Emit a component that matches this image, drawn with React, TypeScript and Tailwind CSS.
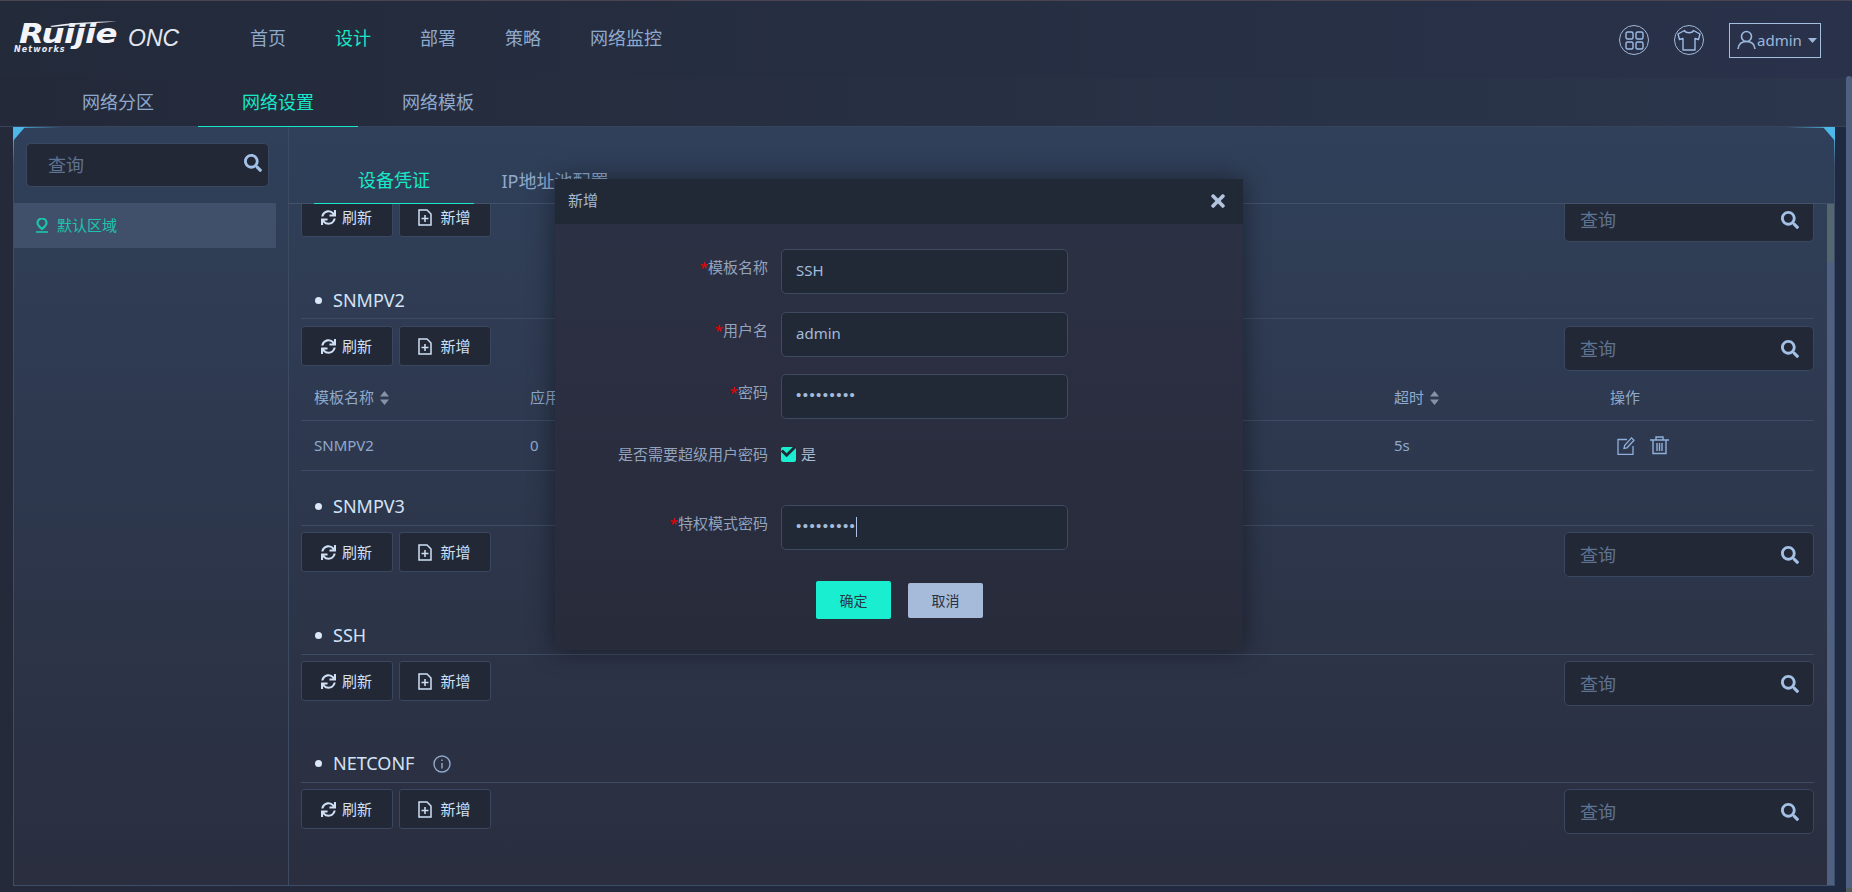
import React from "react";
import { FaSync, FaSearch, FaTimes, FaCheck } from "react-icons/fa";

const Doc = () => (
  <svg width="16" height="17" viewBox="0 0 16 17" fill="none" stroke="currentColor" strokeWidth="1.5">
    <path d="M2 1h8l4 4v11H2z" />
    <path d="M8 6v7M4.5 9.5h7" />
  </svg>
);

const Sort = () => (
  <svg width="9" height="14" viewBox="0 0 9 14" fill="#8593a8">
    <path d="M4.5 0L9 5.5H0zM4.5 14L0 8.5h9z" />
  </svg>
);

const Search = () => (
  <div className="flex h-[45px] w-[250px] items-center justify-between rounded-[5px] border border-[#3a4760] bg-[#222836] pl-[15px] pr-[14px] text-[18px] text-[#5f7390]">
    <span className="pt-[2px]">查询</span>
    <FaSearch className="h-[18px] w-[18px] text-[#a3c0e6]" />
  </div>
);

const Toolbar = () => (
  <div className="flex h-[45px] items-start justify-between">
    <div className="flex gap-[6px]">
      <div className="flex h-[40px] w-[92px] items-center justify-center gap-[6px] rounded-[3px] border border-[#3a4760] bg-[#222836] pr-[1px] text-[15px] text-[#cfe0f5]">
        <FaSync className="h-[15px] w-[15px]" />
        <span>刷新</span>
      </div>
      <div className="flex h-[40px] w-[92px] items-center justify-center gap-[7px] rounded-[3px] border border-[#3a4760] bg-[#222836] pr-[2px] text-[15px] text-[#cfe0f5]">
        <Doc />
        <span>新增</span>
      </div>
    </div>
    <Search />
  </div>
);

const Title = ({ text, info, low }: { text: string; info?: boolean; low?: boolean }) => (
  <div className={`mb-[6px] flex h-[40px] items-center border-b border-[#3d4c64] pl-[14px] text-[18px] text-[#d3e3f7] ${low ? "pt-[4px]" : "pt-[2px]"}`}>
    <span className="mr-[11px] h-[7px] w-[7px] rounded-full bg-[#dbe8f8]" />
    <span>{text}</span>
    {info && (
      <svg className="ml-[19px]" width="18" height="18" viewBox="0 0 18 18" fill="none" stroke="#8fa8cc" strokeWidth="1.4">
        <circle cx="9" cy="9" r="8" />
        <path d="M9 8v5.5M9 4.5v1.6" />
      </svg>
    )}
  </div>
);

const Field = ({ label, children, cls }: { label: string; children: React.ReactNode; cls: string }) => (
  <div className={`flex items-center ${cls}`}>
    <div className="w-[213px] pb-[8px] text-right text-[15px] text-[#93a3bd]">
      <span className="text-[#f00000]">*</span>
      {label}
    </div>
    <div className="ml-[13px] flex h-[45px] w-[287px] items-center rounded-[5px] border border-[#3e4a60] bg-[#222936] pb-[2px] pl-[14px] text-[15px] text-[#a3bcdc]">
      {children}
    </div>
  </div>
);

const Dots = () => <span className="tracking-[1.45px] [font-family:'Liberation_Sans',sans-serif]">•••••••••</span>;

const Corner = ({ flip }: { flip?: boolean }) => (
  <svg className={flip ? "absolute -right-[1px] top-0 -scale-x-100" : "absolute -left-[1px] top-0"} width="48" height="38" viewBox="0 0 48 38">
    <defs>
      <linearGradient id={flip ? "ch2" : "ch1"} x1="0" x2="1" y1="0" y2="0">
        <stop offset="0" stopColor="#4db8e8" stopOpacity="0.8" />
        <stop offset="1" stopColor="#4db8e8" stopOpacity="0" />
      </linearGradient>
      <linearGradient id={flip ? "cv2" : "cv1"} x1="0" x2="0" y1="0" y2="1">
        <stop offset="0" stopColor="#4db8e8" stopOpacity="0.8" />
        <stop offset="1" stopColor="#4db8e8" stopOpacity="0" />
      </linearGradient>
    </defs>
    <path d="M0 0h12L0 14z" fill="#4db8e8" />
    <rect x="10" y="0" width="38" height="1" fill={`url(#${flip ? "ch2" : "ch1"})`} />
    <rect x="0" y="12" width="1" height="26" fill={`url(#${flip ? "cv2" : "cv1"})`} />
  </svg>
);

export default function App() {
  return (
    <div className="relative flex h-[892px] w-[1852px] flex-col overflow-hidden bg-gradient-to-r from-[#252a3b] to-[#1f2a42] [font-family:'Noto_Sans','Noto_Sans_CJK_SC',sans-serif]">
      <div className="h-[1px] bg-[#4a4450]" />
      {/* header */}
      <div className="flex h-[77px] items-center bg-gradient-to-r from-[#232a3a] to-[#29324a] pr-[31px]">
        <div className="relative h-[60px] w-[250px]">
          <span className="absolute left-[19px] top-[14px] origin-left scale-x-[1.2] text-[27px] font-bold italic leading-[20px] tracking-[-0.5px] text-[#f2f4f8] [font-family:'DejaVu_Sans',sans-serif]">Ruijie</span>
          <span className="absolute left-[14px] top-[36px] text-[8px] font-bold italic leading-[8px] tracking-[1.1px] text-[#e8ebf0] [font-family:'DejaVu_Sans',sans-serif]">Networks</span>
          <svg className="absolute left-[50px] top-[11px]" width="67" height="6" viewBox="0 0 67 6">
            <path d="M0 5C18 2 42 .5 67 .5 44 2 22 4 2 6z" fill="#e8ebf0" />
          </svg>
          <span className="absolute left-[128px] top-[13px] text-[23px] italic leading-[30px] text-[#e2e7ef] [font-family:'Liberation_Sans',sans-serif]">ONC</span>
        </div>
        <nav className="flex gap-[49px] pb-[2px] text-[18px] text-[#8fa9cd]">
          <span>首页</span>
          <span className="text-[#17e8c8]">设计</span>
          <span>部署</span>
          <span>策略</span>
          <span>网络监控</span>
        </nav>
        <div className="ml-auto flex items-center gap-[25px] pt-[1px]">
          <div className="flex h-[30px] w-[30px] items-center justify-center rounded-full border border-[#a4b8d4]">
            <svg width="19" height="19" viewBox="0 0 19 19" fill="none" stroke="#9fbbe3" strokeWidth="1.4">
              <rect x="1" y="1" width="7" height="7" rx="1.5" />
              <rect x="11" y="1" width="7" height="7" rx="1.5" />
              <rect x="1" y="11" width="7" height="7" rx="1.5" />
              <rect x="11" y="11" width="7" height="7" rx="1.5" />
            </svg>
          </div>
          <div className="flex h-[30px] w-[30px] items-center justify-center rounded-full border border-[#a4b8d4]">
            <svg width="26" height="24" viewBox="0 0 26 24" fill="none" stroke="#9fbbe3" strokeWidth="1.4" strokeLinejoin="round">
              <path d="M8.5 2.5L2 6l1.5 5.5L7 10.5V22h12V10.5l3.5 1L24 6l-6.5-3.5C16.5 5.5 9.5 5.500 8.500 2.500z" />
            </svg>
          </div>
          <div className="flex h-[35px] w-[92px] items-center border border-[#a6bfe0] pl-[7px] text-[15px] text-[#9db8dd]">
            <svg width="19" height="20" viewBox="0 0 19 20" fill="none" stroke="#9db8dd" strokeWidth="1.6">
              <circle cx="9.5" cy="6.5" r="5" />
              <path d="M1 19c.5-5 4-7.5 8.5-7.5S17.500 14 18 19" />
            </svg>
            <span className="ml-[1px] leading-none">admin</span>
            <svg className="ml-[6px]" width="9" height="5" viewBox="0 0 9 5" fill="#9db8dd">
              <path d="M0 0h9L4.500 5z" />
            </svg>
          </div>
        </div>
      </div>
      {/* sub nav */}
      <div className="flex h-[49px] border-b border-[#36445c] bg-gradient-to-r from-[#232939] to-[#2b364c] pl-[38px] text-[18px] text-[#8fa9cd]">
        <div className="flex h-[49px] w-[160px] items-center justify-center">网络分区</div>
        <div className="flex h-[49px] w-[160px] items-center justify-center border-b border-[#17e8c8] text-[#17e8c8]">网络设置</div>
        <div className="flex h-[49px] w-[160px] items-center justify-center">网络模板</div>
      </div>
      {/* main */}
      <div className="flex-1 pb-[6px] pl-[13px] pr-[17px]">
        <div className="relative flex h-full rounded-t-[3px] border-x border-b border-[#3c4d68] bg-gradient-to-b from-[#30405a] to-[#2a2e3f]">
          <Corner />
          <Corner flip />
          {/* sidebar */}
          <aside className="w-[275px] shrink-0 border-r border-[#3c4a62] pt-[16px]">
            <div className="pl-[12px] pr-[18px]">
              <div className="flex h-[44px] w-[243px] items-center justify-between rounded-[5px] border border-[#3a4760] bg-[#222836] pl-[21px] pr-[6px] text-[18px] text-[#5f7390]">
                <span className="pt-[1px]">查询</span>
                <FaSearch className="mb-[4px] h-[18px] w-[18px] text-[#a3c0e6]" />
              </div>
            </div>
            <div className="mt-[16px] flex h-[45px] w-[262px] items-center bg-[#40506b] pl-[21px] text-[15px] text-[#1cc6ac]">
              <svg width="14" height="15" viewBox="0 0 14 15" fill="none" stroke="#1cc6ac" strokeWidth="2.2">
                <path d="M7 11C4 8.500 2.500 7 2.500 5a4.500 4.500 0 0 1 9 0c0 2-1.500 3.500-4.500 6z" />
                <path d="M1 14h12" strokeWidth="1.6" />
              </svg>
              <span className="ml-[8px]">默认区域</span>
            </div>
          </aside>
          {/* content */}
          <div className="flex min-w-0 flex-1 flex-col">
            <div className="flex h-[77px] shrink-0 border-b border-[#43536c] pl-[25px] text-[18px] text-[#8fa9cd]">
              <div className="flex h-[77px] w-[160px] items-end justify-center border-b border-[#17e8c8] pb-[9px] text-[#17e8c8]">设备凭证</div>
              <div className="flex h-[77px] w-[160px] items-end justify-center pb-[9px] pl-[2px]">IP地址池配置</div>
            </div>
            <div className="relative flex-1 overflow-hidden pl-[12px] pr-[20px]">
              <div className="-mt-[7px]">
                <Toolbar />
                <div className="mt-[37px]">
                  <Title text="SNMPV2" low />
                  <div className="mt-[7px]">
                    <Toolbar />
                  </div>
                  <div className="flex h-[50px] items-center border-b border-[#3d4c64] pl-[13px] pt-[4px] text-[15px] text-[#8fa9cd]">
                    <span className="flex w-[216px] items-center gap-[6px]">模板名称 <Sort /></span>
                    <span className="w-[864px]">应用</span>
                    <span className="flex w-[216px] items-center gap-[6px]">超时 <Sort /></span>
                    <span>操作</span>
                  </div>
                  <div className="flex h-[50px] items-center border-b border-[#3d4c64] pl-[13px] text-[15px] text-[#8fa9cd]">
                    <span className="w-[216px]">SNMPV2</span>
                    <span className="w-[864px]">0</span>
                    <span className="w-[216px]">5s</span>
                    <span className="flex items-center gap-[15px] pl-[7px] text-[#8fb0dc]">
                      <svg width="18" height="18" viewBox="0 0 18 18" fill="none" stroke="currentColor" strokeWidth="1.3">
                        <path d="M10 2.500H1v15h15V9" />
                        <path d="M7 11.500l.6-3L14.500.9l2.500 2.400-7 7.500z" />
                      </svg>
                      <svg width="19" height="19" viewBox="0 0 19 19" fill="none" stroke="currentColor" strokeWidth="1.4">
                        <path d="M0 4h19M6 4V1h7v3M3 4v13.500h13V4M7 7v8M9.500 7v8M12 7v8" />
                      </svg>
                    </span>
                  </div>
                </div>
                <div className="mt-[15px]">
                  <Title text="SNMPV3" />
                  <Toolbar />
                </div>
                <div className="mt-[38px]">
                  <Title text="SSH" />
                  <Toolbar />
                </div>
                <div className="mt-[37px]">
                  <Title text="NETCONF" info />
                  <Toolbar />
                </div>
              </div>
              <div className="absolute bottom-0 right-0 top-0 w-[7px] bg-[#4f6080]">
                <div className="h-[58px] bg-[#556670]" />
              </div>
            </div>
          </div>
        </div>
      </div>
      {/* page scrollbar */}
      <div className="absolute bottom-[4px] right-0 top-[76px] w-[6px] rounded-t-[3px] bg-[#4f6080]" />
      <div className="absolute bottom-0 right-0 h-[4px] w-[6px] bg-[#505a58]" />
      {/* dialog */}
      <div className="absolute left-[555px] top-[179px] h-[471px] w-[688px] bg-gradient-to-b from-[#2d3145] to-[#272b3a] shadow-[0_0_24px_rgba(0,0,0,0.45)]">
        <div className="flex h-[45px] items-center justify-between bg-[#222936] pb-[2px] pl-[13px] pr-[15px] text-[15px] text-[#a9bad2]">
          <span>新增</span>
          <FaTimes className="h-[20px] w-[20px] text-[#b3c4dd]" />
        </div>
        <div className="pt-[25px]">
          <Field label="模板名称" cls="mb-[18px]">SSH</Field>
          <Field label="用户名" cls="mb-[17px]">admin</Field>
          <Field label="密码" cls="">
            <Dots />
          </Field>
          <div className="mt-[28px] flex h-[15px] items-center">
            <div className="w-[213px] text-right text-[15px] text-[#93a3bd]">是否需要超级用户密码</div>
            <div className="ml-[13px] flex h-[15px] w-[15px] items-center justify-center rounded-[2px] bg-[#1aeed0]">
              <FaCheck className="h-[15px] w-[15px] -translate-y-[3px] text-[#222936]" />
            </div>
            <span className="ml-[5px] text-[15px] text-[#a9bad2]">是</span>
          </div>
          <div className="mt-[43px]">
            <Field label="特权模式密码" cls="">
              <Dots />
              <span className="h-[20px] w-[1px] bg-[#a9c2e6]" />
            </Field>
          </div>
          <div className="mt-[31px] flex items-center pl-[261px]">
            <div className="flex h-[38px] w-[75px] items-center justify-center rounded-[2px] bg-[#1aeed0] text-[14px] text-[#26384a]">确定</div>
            <div className="ml-[17px] flex h-[35px] w-[75px] items-center justify-center rounded-[2px] bg-[#a6bbda] text-[14px] text-[#2a3040]">取消</div>
          </div>
        </div>
      </div>
    </div>
  );
}
